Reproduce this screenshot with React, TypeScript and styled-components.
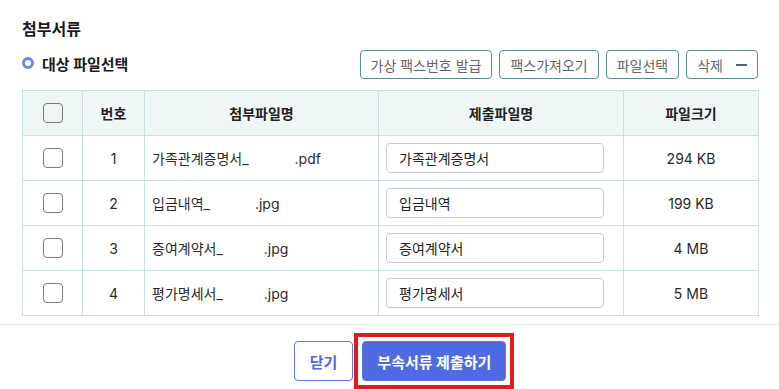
import React from 'react';
import styled, { createGlobalStyle } from 'styled-components';

const GlobalStyle = createGlobalStyle`
  html, body {
    margin: 0;
    padding: 0;
    background: #ffffff;
  }
  body {
    font-family: Inter, 'Noto Sans CJK KR', sans-serif;
    color: #222222;
  }
`;

const Wrapper = styled.div`
  width: 779px;
  height: 389px;
  overflow: hidden;
  display: flex;
  flex-direction: column;
`;

const Content = styled.section`
  padding: 19px 21px 0 22px;
`;

const Title = styled.h2`
  margin: 0;
  font-size: 16px;
  font-weight: 700;
  line-height: 20px;
  color: #1a1a1a;
`;

const SubBar = styled.div`
  display: flex;
  align-items: center;
  justify-content: space-between;
  margin-top: 11px;
`;

const SubTitle = styled.div`
  display: flex;
  align-items: center;
  gap: 8px;
  font-size: 15px;
  font-weight: 700;
  color: #1a1a1a;
  margin-top: -3px;
`;

const Ring = styled.span`
  width: 6px;
  height: 6px;
  border: 3px solid #6f87e8;
  border-radius: 50%;
`;

const Tools = styled.div`
  display: flex;
  gap: 7px;
`;

const ToolButton = styled.button`
  height: 29px;
  padding: 0 10px;
  border: 1px solid #5d8a97;
  border-radius: 4px;
  background: #ffffff;
  color: #666666;
  font-family: inherit;
  font-size: 14px;
  display: flex;
  align-items: center;
  gap: 13px;
`;

const Minus = styled.span`
  width: 11px;
  height: 2px;
  background: #4b6a78;
`;

const Table = styled.table`
  margin-top: 11px;
  width: 736px;
  border-collapse: collapse;
  table-layout: fixed;
  border: 1px solid #b9d3d8;
  font-size: 14px;
`;

const Th = styled.th`
  height: 44px;
  background: #eef6f6;
  border: 1px solid #c9dfe2;
  font-weight: 700;
  color: #222222;
  padding: 0;
`;

const Td = styled.td<{ $align?: string }>`
  height: 44px;
  border: 1px solid #c9dfe2;
  text-align: ${(p) => p.$align || 'center'};
  padding: ${(p) => (p.$align === 'left' ? '0 0 0 7px' : '0')};
  color: #2a2a2a;
`;

const Check = styled.span`
  display: inline-block;
  width: 18px;
  height: 18px;
  border: 1px solid #7a7a7a;
  border-radius: 4px;
  vertical-align: middle;
`;

const Gap = styled.span<{ $w: number }>`
  display: inline-block;
  width: ${(p) => p.$w}px;
`;

const NameInput = styled.div`
  width: 204px;
  height: 28px;
  border: 1px solid #c9c9d6;
  border-radius: 4px;
  padding-left: 12px;
  display: flex;
  align-items: center;
  font-size: 14px;
  color: #222222;
`;

const Footer = styled.footer`
  margin-top: 8px;
  border-top: 1px solid #e6e6e6;
  display: flex;
  justify-content: center;
  gap: 9px;
  padding-top: 16px;
  padding-left: 21px;
`;

const Button = styled.button<{ $primary?: boolean }>`
  position: relative;
  height: 40px;
  padding: 0 ${(p) => (p.$primary ? '14px' : '15px')};
  border-radius: 4px;
  border: 1px solid #5a78e4;
  background: ${(p) => (p.$primary ? '#506ae0' : '#ffffff')};
  color: ${(p) => (p.$primary ? '#ffffff' : '#4d67dc')};
  font-family: inherit;
  font-size: 15px;
  font-weight: 700;

  &::after {
    content: '';
    display: ${(p) => (p.$primary ? 'block' : 'none')};
    position: absolute;
    inset: -9px;
    border: 4px solid #e01b1b;
  }
`;

const rows = [
  { no: 1, base: '가족관계증명서_', gap: 46, ext: '.pdf', name: '가족관계증명서', size: '294 KB' },
  { no: 2, base: '입금내역_', gap: 45, ext: '.jpg', name: '입금내역', size: '199 KB' },
  { no: 3, base: '증여계약서_', gap: 41, ext: '.jpg', name: '증여계약서', size: '4 MB' },
  { no: 4, base: '평가명세서_', gap: 41, ext: '.jpg', name: '평가명세서', size: '5 MB' },
];

const App: React.FC = () => {
  return (
    <Wrapper>
      <GlobalStyle />
      <Content>
        <Title>첨부서류</Title>
        <SubBar>
          <SubTitle>
            <Ring />
            대상 파일선택
          </SubTitle>
          <Tools>
            <ToolButton>가상 팩스번호 발급</ToolButton>
            <ToolButton>팩스가져오기</ToolButton>
            <ToolButton>파일선택</ToolButton>
            <ToolButton>
              삭제 <Minus />
            </ToolButton>
          </Tools>
        </SubBar>
        <Table>
          <colgroup>
            <col style={{ width: 60 }} />
            <col style={{ width: 62 }} />
            <col style={{ width: 234 }} />
            <col style={{ width: 245 }} />
            <col style={{ width: 135 }} />
          </colgroup>
          <thead>
            <tr>
              <Th>
                <Check />
              </Th>
              <Th>번호</Th>
              <Th>첨부파일명</Th>
              <Th>제출파일명</Th>
              <Th>파일크기</Th>
            </tr>
          </thead>
          <tbody>
            {rows.map((r) => (
              <tr key={r.no}>
                <Td>
                  <Check />
                </Td>
                <Td>{r.no}</Td>
                <Td $align="left">
                  {r.base}
                  <Gap $w={r.gap} />
                  {r.ext}
                </Td>
                <Td $align="left">
                  <NameInput>{r.name}</NameInput>
                </Td>
                <Td>{r.size}</Td>
              </tr>
            ))}
          </tbody>
        </Table>
      </Content>
      <Footer>
        <Button>닫기</Button>
        <Button $primary>부속서류 제출하기</Button>
      </Footer>
    </Wrapper>
  );
};

export default App;
